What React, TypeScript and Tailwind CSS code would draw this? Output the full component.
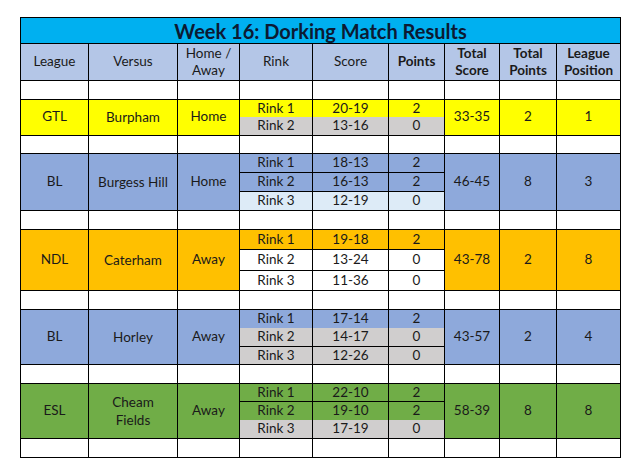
import React from 'react';

type Rink = { name: string; score: string; points: string; bg: string; lineAbove?: boolean };
type Match = {
  league: string;
  versus: React.ReactNode;
  venue: string;
  bg: string;
  total: string;
  totalPoints: string;
  position: string;
  rowH: string;
  rinks: Rink[];
};

const matches: Match[] = [
  {
    league: 'GTL',
    versus: 'Burpham',
    venue: 'Home',
    bg: 'bg-[#FFFF00]',
    total: '33-35',
    totalPoints: '2',
    position: '1',
    rowH: 'h-[18px]',
    rinks: [
      { name: 'Rink 1', score: '20-19', points: '2', bg: 'bg-[#FFFF00]' },
      { name: 'Rink 2', score: '13-16', points: '0', bg: 'bg-[#D0CECE]', lineAbove: false },
    ],
  },
  {
    league: 'BL',
    versus: 'Burgess Hill',
    venue: 'Home',
    bg: 'bg-[#8EA9DB]',
    total: '46-45',
    totalPoints: '8',
    position: '3',
    rowH: 'h-[19px]',
    rinks: [
      { name: 'Rink 1', score: '18-13', points: '2', bg: 'bg-[#8EA9DB]' },
      { name: 'Rink 2', score: '16-13', points: '2', bg: 'bg-[#8EA9DB]', lineAbove: true },
      { name: 'Rink 3', score: '12-19', points: '0', bg: 'bg-[#DDEBF7]', lineAbove: true },
    ],
  },
  {
    league: 'NDL',
    versus: 'Caterham',
    venue: 'Away',
    bg: 'bg-[#FFC000]',
    total: '43-78',
    totalPoints: '2',
    position: '8',
    rowH: 'h-[20.5px]',
    rinks: [
      { name: 'Rink 1', score: '19-18', points: '2', bg: 'bg-[#FFC000]' },
      { name: 'Rink 2', score: '13-24', points: '0', bg: 'bg-white', lineAbove: true },
      { name: 'Rink 3', score: '11-36', points: '0', bg: 'bg-white', lineAbove: true },
    ],
  },
  {
    league: 'BL',
    versus: 'Horley',
    venue: 'Away',
    bg: 'bg-[#8EA9DB]',
    total: '43-57',
    totalPoints: '2',
    position: '4',
    rowH: 'h-[18.5px]',
    rinks: [
      { name: 'Rink 1', score: '17-14', points: '2', bg: 'bg-[#8EA9DB]' },
      { name: 'Rink 2', score: '14-17', points: '0', bg: 'bg-[#D0CECE]', lineAbove: false },
      { name: 'Rink 3', score: '12-26', points: '0', bg: 'bg-[#D0CECE]', lineAbove: true },
    ],
  },
  {
    league: 'ESL',
    versus: (
      <>
        Cheam
        <br />
        Fields
      </>
    ),
    venue: 'Away',
    bg: 'bg-[#70AD47]',
    total: '58-39',
    totalPoints: '8',
    position: '8',
    rowH: 'h-[18.5px]',
    rinks: [
      { name: 'Rink 1', score: '22-10', points: '2', bg: 'bg-[#70AD47]' },
      { name: 'Rink 2', score: '19-10', points: '2', bg: 'bg-[#70AD47]', lineAbove: true },
      { name: 'Rink 3', score: '17-19', points: '0', bg: 'bg-[#D0CECE]', lineAbove: false },
    ],
  },
];

const cell = 'border border-black text-center align-middle p-0';

const BlankRow = () => (
  <tr className="h-[18.5px]">
    {Array.from({ length: 9 }).map((_, i) => (
      <td key={i} className={cell} />
    ))}
  </tr>
);

const MatchRows = ({ m }: { m: Match }) => {
  const n = m.rinks.length;
  return (
    <>
      {m.rinks.map((r, i) => {
        const next = m.rinks[i + 1];
        const edge = `${r.lineAbove === false ? 'border-t-0' : ''} ${next && next.lineAbove === false ? 'border-b-0' : ''}`;
        return (
          <tr key={i} className={m.rowH}>
            {i === 0 && (
              <>
                <td rowSpan={n} className={`${cell} ${m.bg}`}>{m.league}</td>
                <td rowSpan={n} className={`${cell} ${m.bg} leading-[18px]`}>{m.versus}</td>
                <td rowSpan={n} className={`${cell} ${m.bg}`}>{m.venue}</td>
              </>
            )}
            <td className={`${cell} ${r.bg} ${edge}`}>{r.name}</td>
            <td className={`${cell} ${r.bg} ${edge}`}>{r.score}</td>
            <td className={`${cell} ${r.bg} ${edge}`}>{r.points}</td>
            {i === 0 && (
              <>
                <td rowSpan={n} className={`${cell} ${m.bg}`}>{m.total}</td>
                <td rowSpan={n} className={`${cell} ${m.bg}`}>{m.totalPoints}</td>
                <td rowSpan={n} className={`${cell} ${m.bg}`}>{m.position}</td>
              </>
            )}
          </tr>
        );
      })}
      <BlankRow />
    </>
  );
};

export default function App() {
  return (
    <div className="w-[639px] h-[476px] bg-white pt-[17px] pl-[20px] font-['Lato','Liberation_Sans',sans-serif] text-[13.5px] text-[#1a1a1a]">
      <table className="table-fixed border-collapse w-[600px] leading-none">
        <colgroup>
          <col className="w-[68px]" />
          <col className="w-[89px]" />
          <col className="w-[62px]" />
          <col className="w-[73px]" />
          <col className="w-[76px]" />
          <col className="w-[56px]" />
          <col className="w-[55px]" />
          <col className="w-[57px]" />
          <col className="w-[64px]" />
        </colgroup>
        <tbody>
          <tr className="h-[26px]">
            <td colSpan={9} className={`${cell} bg-[#00B0F0] text-[20px] font-bold text-[#0c1a33]`}>
              Week 16: Dorking Match Results
            </td>
          </tr>
          <tr className="h-[37px] bg-[#B4C6E7]">
            <td className={cell}>League</td>
            <td className={cell}>Versus</td>
            <td className={`${cell} leading-[17px]`}>
              Home /<br />Away
            </td>
            <td className={cell}>Rink</td>
            <td className={cell}>Score</td>
            <td className={`${cell} font-bold`}>Points</td>
            <td className={`${cell} font-bold leading-[17px]`}>
              Total<br />Score
            </td>
            <td className={`${cell} font-bold leading-[17px]`}>
              Total<br />Points
            </td>
            <td className={`${cell} font-bold leading-[17px]`}>
              League<br />Position
            </td>
          </tr>
          <BlankRow />
          {matches.map((m, i) => (
            <MatchRows key={i} m={m} />
          ))}
        </tbody>
      </table>
    </div>
  );
}
